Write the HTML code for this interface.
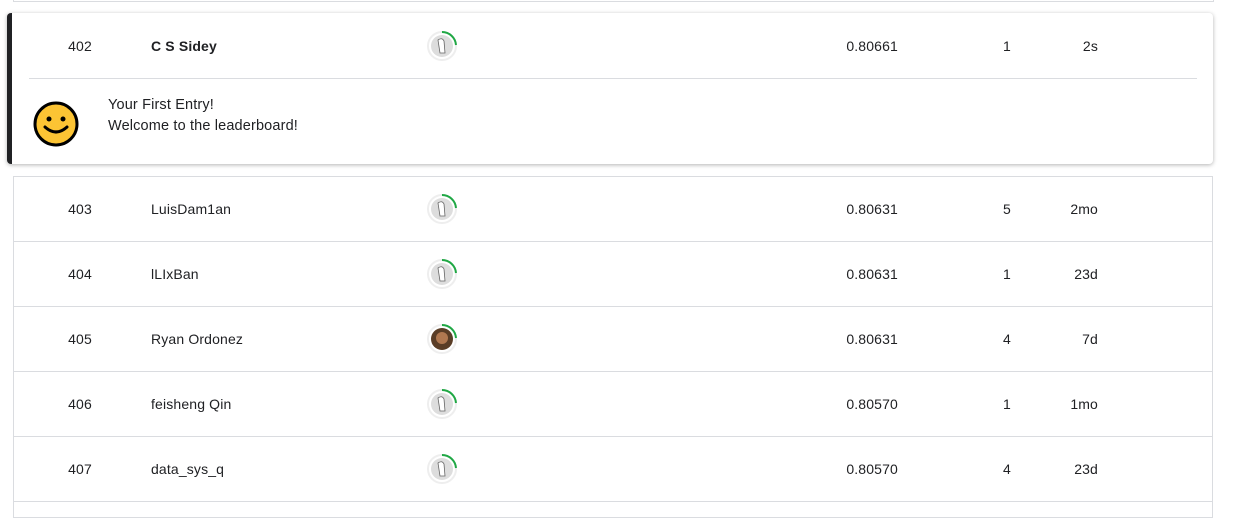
<!DOCTYPE html>
<html><head><style>
body{margin:0;width:1248px;height:508px;background:#fff;font-family:"Liberation Sans",sans-serif;font-size:14px;color:#202124;position:relative;overflow:hidden;letter-spacing:.15px}
.t{position:absolute;line-height:16px;white-space:nowrap}
.r{text-align:right}
.c{text-align:center}
.av{position:absolute;width:30px;height:30px}
</style></head><body>
<div style="position:absolute;left:13px;top:0;width:1199px;height:1px;border-bottom:1px solid #dadce0;border-left:1px solid #dadce0;border-right:1px solid #dadce0"></div>

<div style="position:absolute;left:7px;top:13px;width:1206px;height:151px;background:#fff;border-radius:4px;box-shadow:0 1px 4px rgba(0,0,0,.3);border-left:5px solid #202124;box-sizing:border-box"></div>
<div style="position:absolute;left:29px;top:78px;width:1168px;height:1px;background:#dadce0"></div>

<div style="position:absolute;left:13px;top:176px;width:1198px;height:340px;border:1px solid #dadce0"></div>
<div style="position:absolute;left:14px;top:241px;width:1198px;height:1px;background:#dadce0"></div>
<div style="position:absolute;left:14px;top:306px;width:1198px;height:1px;background:#dadce0"></div>
<div style="position:absolute;left:14px;top:371px;width:1198px;height:1px;background:#dadce0"></div>
<div style="position:absolute;left:14px;top:436px;width:1198px;height:1px;background:#dadce0"></div>
<div style="position:absolute;left:14px;top:501px;width:1198px;height:1px;background:#dadce0"></div>

<svg style="position:absolute;left:33px;top:101px" width="46" height="46" viewBox="0 0 46 46"><circle cx="23" cy="23" r="21" fill="#fcc434" stroke="#000" stroke-width="3"/><circle cx="16" cy="18" r="2.5"/><circle cx="30" cy="18" r="2.5"/><path d="M12 26 Q23 36 34 26" fill="none" stroke="#000" stroke-width="3" stroke-linecap="round"/></svg>
<div class="t" style="left:108px;top:97px;font-size:14.5px">Your First Entry!</div>
<div class="t" style="left:108px;top:118px;font-size:14.5px">Welcome to the leaderboard!</div>

<div id="rows"></div>
<script>
var rows=[["402","C S Sidey","0.80661","1","2s",46,1,0],["403","LuisDam1an","0.80631","5","2mo",209,0,0],["404","lLIxBan","0.80631","1","23d",274,0,0],["405","Ryan Ordonez","0.80631","4","7d",339,0,1],["406","feisheng Qin","0.80570","1","1mo",404,0,0],["407","data_sys_q","0.80570","4","23d",469,0,0]];
var h="";
rows.forEach(function(r){var y=r[5]-8;
h+='<div class="t c" style="left:50px;width:60px;top:'+y+'px">'+r[0]+'</div>';
h+='<div class="t" style="left:151px;top:'+y+'px;'+(r[6]?'font-weight:bold':'')+'">'+r[1]+'</div>';
h+='<div class="t r" style="left:798px;width:100px;top:'+y+'px">'+r[2]+'</div>';
h+='<div class="t c" style="left:987px;width:40px;top:'+y+'px">'+r[3]+'</div>';
h+='<div class="t r" style="left:1040px;width:58px;top:'+y+'px">'+r[4]+'</div>';
var fill=r[7]?'<circle cx="15" cy="15" r="11" fill="#5a3d26"/><circle cx="15" cy="14" r="6" fill="#b07850"/>':'<circle cx="15" cy="15" r="11" fill="#ddd"/><path d="M11 9 Q15 6 17 10 L18 22 L13 22 Z" fill="#fff" stroke="#666" stroke-width=".8"/>';
h+='<svg class="av" style="left:427px;top:'+(r[5]-15)+'px" viewBox="0 0 30 30"><circle cx="15" cy="15" r="14" fill="none" stroke="#eee" stroke-width="2"/>'+fill+'<path d="M15 1 A14 14 0 0 1 29 14" fill="none" stroke="#20a845" stroke-width="2"/></svg>';
});
document.getElementById("rows").innerHTML=h;
</script>
</body></html>
